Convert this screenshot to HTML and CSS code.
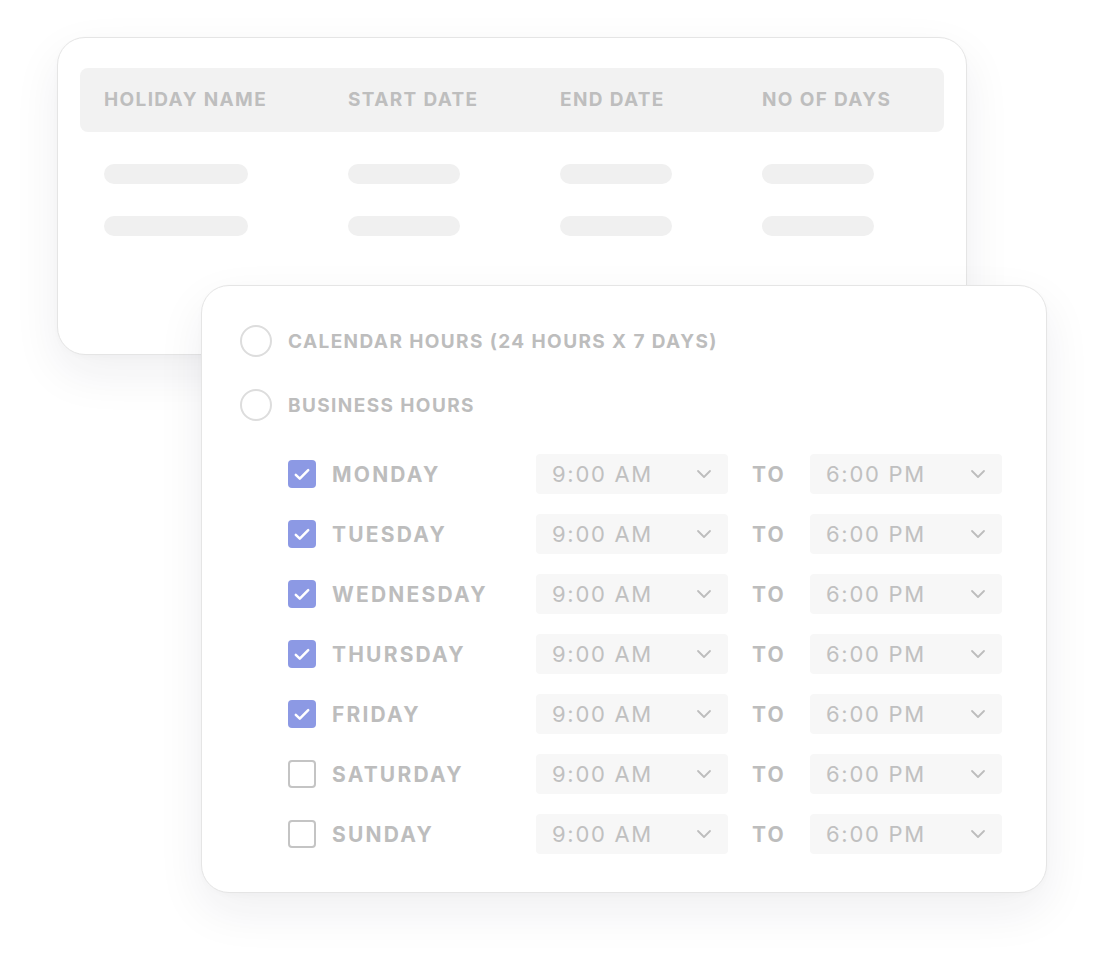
FILE: index.html
```html
<!DOCTYPE html>
<html>
<head>
<meta charset="utf-8">
<link rel="stylesheet" href="styles.css">
</head>
<body>
<div class="stage">
  <div class="card table-card">
    <div class="thead">
      <span>HOLIDAY NAME</span>
      <span>START DATE</span>
      <span>END DATE</span>
      <span>NO OF DAYS</span>
    </div>
    <div class="trow">
      <i class="bar wide"></i><i class="bar"></i><i class="bar"></i><i class="bar"></i>
    </div>
    <div class="trow">
      <i class="bar wide"></i><i class="bar"></i><i class="bar"></i><i class="bar"></i>
    </div>
  </div>

  <div class="card hours-card">
    <div class="radio-row"><span class="radio"></span><span class="radio-label">CALENDAR HOURS (24 HOURS X 7 DAYS)</span></div>
    <div class="radio-row"><span class="radio"></span><span class="radio-label">BUSINESS HOURS</span></div>
    <div class="days">
      <div class="day"><span class="check on"><svg viewBox="0 0 28 28"><path d="M7.8 14.8l4 3.8 8.4-8.4"/></svg></span><span class="day-name">MONDAY</span><span class="select">9:00 AM<svg class="chev" viewBox="0 0 16 10"><path d="M2 2l6 6 6-6"/></svg></span><span class="to">TO</span><span class="select">6:00 PM<svg class="chev" viewBox="0 0 16 10"><path d="M2 2l6 6 6-6"/></svg></span></div>
      <div class="day"><span class="check on"><svg viewBox="0 0 28 28"><path d="M7.8 14.8l4 3.8 8.4-8.4"/></svg></span><span class="day-name">TUESDAY</span><span class="select">9:00 AM<svg class="chev" viewBox="0 0 16 10"><path d="M2 2l6 6 6-6"/></svg></span><span class="to">TO</span><span class="select">6:00 PM<svg class="chev" viewBox="0 0 16 10"><path d="M2 2l6 6 6-6"/></svg></span></div>
      <div class="day"><span class="check on"><svg viewBox="0 0 28 28"><path d="M7.8 14.8l4 3.8 8.4-8.4"/></svg></span><span class="day-name">WEDNESDAY</span><span class="select">9:00 AM<svg class="chev" viewBox="0 0 16 10"><path d="M2 2l6 6 6-6"/></svg></span><span class="to">TO</span><span class="select">6:00 PM<svg class="chev" viewBox="0 0 16 10"><path d="M2 2l6 6 6-6"/></svg></span></div>
      <div class="day"><span class="check on"><svg viewBox="0 0 28 28"><path d="M7.8 14.8l4 3.8 8.4-8.4"/></svg></span><span class="day-name">THURSDAY</span><span class="select">9:00 AM<svg class="chev" viewBox="0 0 16 10"><path d="M2 2l6 6 6-6"/></svg></span><span class="to">TO</span><span class="select">6:00 PM<svg class="chev" viewBox="0 0 16 10"><path d="M2 2l6 6 6-6"/></svg></span></div>
      <div class="day"><span class="check on"><svg viewBox="0 0 28 28"><path d="M7.8 14.8l4 3.8 8.4-8.4"/></svg></span><span class="day-name">FRIDAY</span><span class="select">9:00 AM<svg class="chev" viewBox="0 0 16 10"><path d="M2 2l6 6 6-6"/></svg></span><span class="to">TO</span><span class="select">6:00 PM<svg class="chev" viewBox="0 0 16 10"><path d="M2 2l6 6 6-6"/></svg></span></div>
      <div class="day"><span class="check"></span><span class="day-name">SATURDAY</span><span class="select">9:00 AM<svg class="chev" viewBox="0 0 16 10"><path d="M2 2l6 6 6-6"/></svg></span><span class="to">TO</span><span class="select">6:00 PM<svg class="chev" viewBox="0 0 16 10"><path d="M2 2l6 6 6-6"/></svg></span></div>
      <div class="day"><span class="check"></span><span class="day-name">SUNDAY</span><span class="select">9:00 AM<svg class="chev" viewBox="0 0 16 10"><path d="M2 2l6 6 6-6"/></svg></span><span class="to">TO</span><span class="select">6:00 PM<svg class="chev" viewBox="0 0 16 10"><path d="M2 2l6 6 6-6"/></svg></span></div>
    </div>
  </div>
</div>
</body>
</html>
```
FILE: styles.css
```css
* { box-sizing: border-box; }
html, body { margin: 0; padding: 0; background: #ffffff; }
body {
  font-family: Inter, "Noto Sans", "Liberation Sans", sans-serif;
  color: #bdbdbd;
  width: 1095px;
  height: 958px;
  overflow: hidden;
}
.stage { padding-top: 37px; }

.card {
  background: #fff;
  border: 1px solid #e5e5e5;
  border-radius: 28px;
  box-shadow: 0 18px 48px rgba(30, 30, 60, 0.07), 0 2px 6px rgba(0, 0, 0, 0.02);
}

.table-card {
  margin-left: 57px;
  width: 910px;
  height: 318px;
  padding: 30px 22px 0 22px;
}
.thead {
  height: 64px;
  background: #f2f2f2;
  border-radius: 8px;
  display: grid;
  grid-template-columns: 244px 212px 202px 1fr;
  align-items: center;
  padding-left: 24px;
  padding-bottom: 1px;
  font-size: 19px;
  font-weight: 700;
  letter-spacing: 1.35px;
  color: #bebebe;
}
.trow {
  display: grid;
  grid-template-columns: 244px 212px 202px 1fr;
  padding-left: 24px;
  margin-top: 32px;
}
.bar {
  display: block;
  height: 20px;
  width: 112px;
  border-radius: 10px;
  background: #f0f0f0;
}
.bar.wide { width: 144px; }

.hours-card {
  position: relative;
  margin-top: -70px;
  margin-left: 201px;
  width: 846px;
  height: 608px;
  padding: 39px 0 0 38px;
}
.radio-row {
  display: flex;
  align-items: center;
  height: 32px;
  margin-bottom: 32px;
}
.radio-row + .radio-row { margin-bottom: 33px; }
.radio {
  width: 32px;
  height: 32px;
  border-radius: 50%;
  border: 2px solid #dddddd;
  margin-right: 16px;
  flex: none;
}
.radio-label {
  font-size: 19px;
  font-weight: 700;
  letter-spacing: 1.4px;
  color: #bdbdbd;
}
.days {
  padding-left: 48px;
  display: flex;
  flex-direction: column;
  gap: 20px;
}
.day {
  display: flex;
  align-items: center;
  height: 40px;
}
.check {
  width: 28px;
  height: 28px;
  border-radius: 4px;
  border: 2px solid #c4c4c4;
  margin-right: 16px;
  flex: none;
  display: flex;
}
.check.on {
  background: #8c99e4;
  border: none;
}
.check svg { width: 28px; height: 28px; }
.check path {
  fill: none;
  stroke: #fff;
  stroke-width: 2.5;
  stroke-linecap: round;
  stroke-linejoin: round;
}
.day-name {
  width: 204px;
  font-size: 21px;
  font-weight: 700;
  letter-spacing: 2.2px;
  color: #bdbdbd;
  padding-top: 1px;
}
.select {
  width: 192px;
  height: 40px;
  background: #f7f7f7;
  border-radius: 4px;
  display: flex;
  align-items: center;
  justify-content: space-between;
  padding: 0 16px 0 16px;
  font-size: 22px;
  font-weight: 400;
  letter-spacing: 1.7px;
  color: #c0c0c0;
}
.chev { width: 16px; height: 10px; }
.chev path {
  fill: none;
  stroke: #bdbdbd;
  stroke-width: 1.8;
  stroke-linecap: round;
  stroke-linejoin: round;
}
.to {
  width: 82px;
  padding-left: 24px;
  padding-top: 1px;
  font-size: 21px;
  font-weight: 700;
  letter-spacing: 2.2px;
  color: #bdbdbd;
}
```
